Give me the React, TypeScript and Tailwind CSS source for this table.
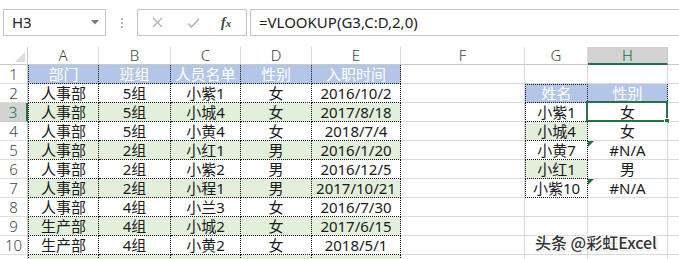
import React from "react";

type Fill = "blue" | "green" | "none";

const FONT = '"Noto Sans", "Noto Sans CJK SC", sans-serif';

const cols = ["A", "B", "C", "D", "E", "F", "G", "H"];

const table: { cells: string[]; fill: Fill }[] = [
  { cells: ["部门", "班组", "人员名单", "性别", "入职时间"], fill: "blue" },
  { cells: ["人事部", "5组", "小紫1", "女", "2016/10/2"], fill: "none" },
  { cells: ["人事部", "5组", "小城4", "女", "2017/8/18"], fill: "green" },
  { cells: ["人事部", "5组", "小黄4", "女", "2018/7/4"], fill: "none" },
  { cells: ["人事部", "2组", "小红1", "男", "2016/1/20"], fill: "green" },
  { cells: ["人事部", "2组", "小紫2", "男", "2016/12/5"], fill: "none" },
  { cells: ["人事部", "2组", "小程1", "男", "2017/10/21"], fill: "green" },
  { cells: ["人事部", "4组", "小兰3", "女", "2016/7/30"], fill: "none" },
  { cells: ["生产部", "4组", "小城2", "女", "2017/6/15"], fill: "green" },
  { cells: ["生产部", "4组", "小黄2", "女", "2018/5/1"], fill: "none" },
  { cells: ["", "", "", "", ""], fill: "green" },
];

// lookup block in G:H, keyed by row index (0 = row 1)
const lookup: Record<number, { g: string; h: string; gFill: Fill; hFill: Fill; err?: boolean }> = {
  1: { g: "姓名", h: "性别", gFill: "blue", hFill: "blue" },
  2: { g: "小紫1", h: "女", gFill: "none", hFill: "none" },
  3: { g: "小城4", h: "女", gFill: "green", hFill: "none" },
  4: { g: "小黄7", h: "#N/A", gFill: "none", hFill: "none", err: true },
  5: { g: "小红1", h: "男", gFill: "green", hFill: "none" },
  6: { g: "小紫10", h: "#N/A", gFill: "none", hFill: "none", err: true },
};

function fillClass(f: Fill) {
  if (f === "blue") return "bg-[#b4c6e7] text-white";
  if (f === "green") return "bg-[#e2efda] text-[#1a1a1a]";
  return "bg-white text-[#1a1a1a]";
}

function Cell({
  text,
  fill,
  dotted,
  dotLeft,
  dotTop,
  children,
}: {
  text?: string;
  fill: Fill;
  dotted?: boolean;
  dotLeft?: boolean;
  dotTop?: boolean;
  children?: React.ReactNode;
}) {
  return (
    <div
      className={`relative flex items-center justify-center overflow-visible whitespace-nowrap text-[15px] leading-none ${fillClass(
        fill
      )} ${
        dotted
          ? "border-r border-b border-dotted border-[#111]"
          : "border-r border-b border-solid border-[#dadada]"
      } ${dotLeft ? "border-l border-l-[#111] border-l-dotted" : ""} ${
        dotTop ? "border-t border-t-[#111] border-t-dotted" : ""
      }`}
    >
      {text}
      {children}
    </div>
  );
}

function ErrorMark() {
  return (
    <svg className="absolute left-0 top-0" width="6" height="6" viewBox="0 0 6 6">
      <polygon points="0,0 6,0 0,6" fill="#1e7145" />
    </svg>
  );
}

function FormulaBar() {
  return (
    <div className="flex h-[47px] items-start bg-white pt-[9px]" style={{ fontFamily: FONT }}>
      <div className="ml-[3px] flex h-[27px] w-[103px] items-center justify-between border border-[#c6c6c6] pl-[8px] pr-[6px] text-[15px] text-[#222]">
        <span>H3</span>
        <svg width="8" height="5" viewBox="0 0 8 5">
          <polygon points="0,0 8,0 4,4.5" fill="#7a7a7a" />
        </svg>
      </div>
      <div className="flex h-[27px] w-[31px] flex-col items-center justify-center gap-[2px]">
        <span className="h-[2px] w-[2px] bg-[#b5b5b5]" />
        <span className="h-[2px] w-[2px] bg-[#b5b5b5]" />
        <span className="h-[2px] w-[2px] bg-[#b5b5b5]" />
      </div>
      <div className="flex h-[27px] w-[110px] items-center border border-[#c6c6c6]">
        <svg className="ml-[14px]" width="11" height="11" viewBox="0 0 11 11">
          <path d="M1 1 L10 10 M10 1 L1 10" stroke="#b3b3b3" strokeWidth="1.4" />
        </svg>
        <svg className="ml-[24px]" width="13" height="10" viewBox="0 0 13 10">
          <path d="M1 5.5 L4.5 9 L12 1" stroke="#b3b3b3" strokeWidth="1.6" fill="none" />
        </svg>
        <span
          className="ml-[21px] text-[14px] italic text-[#444]"
          style={{ fontFamily: '"Liberation Serif", serif' }}
        >
          <b className="font-bold">f</b>
          <span className="text-[11px] font-bold">x</span>
        </span>
      </div>
      <div className="ml-[3px] flex h-[27px] flex-1 items-center border-y border-l border-[#c6c6c6] pl-[8px] text-[15px] text-[#222]">
        =VLOOKUP(G3,C:D,2,0)
      </div>
    </div>
  );
}

export default function App() {
  const rows = table.length;
  return (
    <div className="relative h-[259px] w-[679px] overflow-hidden bg-white" style={{ fontFamily: FONT }}>
      <FormulaBar />
      <div className="grid grid-cols-[28px_71px_72px_70px_71px_89px_124px_63px_80px_11px] grid-rows-[18px_repeat(11,19px)]">
        {/* column headings */}
        <div className="relative border-r border-b border-[#c8c8c8] bg-white">
          <svg className="absolute bottom-[2px] right-[2px]" width="10" height="10" viewBox="0 0 10 10">
            <polygon points="10,0 10,10 0,10" fill="#dcdcdc" />
          </svg>
        </div>
        {cols.map((c) =>
          c === "H" ? (
            <div
              key={c}
              className="flex items-center justify-center border-r border-b-2 border-r-[#c8c8c8] border-b-[#217346] bg-[#d3d3d3] text-[15px] font-light text-[#1d6b3d]"
            >
              {c}
            </div>
          ) : (
            <div
              key={c}
              className="flex items-center justify-center border-r border-b border-r-[#dedede] border-b-[#c8c8c8] bg-white text-[15px] font-light text-[#444]"
            >
              {c}
            </div>
          )
        )}
        <div className="border-b border-[#c8c8c8] bg-white" />

        {Array.from({ length: rows }).map((_, r) => {
          const t = table[r];
          const lk = lookup[r];
          const selectedRow = r === 2;
          const lastPartial = r === rows - 1;
          return (
            <React.Fragment key={r}>
              {selectedRow ? (
                <div className="flex items-center justify-center border-r-2 border-b border-r-[#217346] border-b-[#c8c8c8] bg-[#d3d3d3] text-[15px] font-light text-[#1d6b3d]">
                  {r + 1}
                </div>
              ) : (
                <div className="flex items-center justify-center border-r border-b border-r-[#c8c8c8] border-b-[#dedede] bg-white text-[15px] font-light text-[#444]">
                  {lastPartial ? "" : r + 1}
                </div>
              )}
              {t.cells.map((v, ci) => (
                <Cell key={ci} text={v} fill={t.fill} dotted dotLeft={ci === 0} />
              ))}
              {/* F */}
              <Cell fill="none" />
              {/* G */}
              {lk ? (
                <Cell text={lk.g} fill={lk.gFill} dotted dotLeft dotTop={r === 1} />
              ) : (
                <Cell fill="none" />
              )}
              {/* H */}
              {lk ? (
                <Cell text={lk.h} fill={lk.hFill} dotted={r === 1}>
                  {lk.err && <ErrorMark />}
                  {r === 2 && (
                    <div className="absolute left-[-2px] top-[-2px] h-[21px] w-[82px] border-2 border-[#217346]">
                      <div className="absolute bottom-[-4px] right-[-4px] h-[6px] w-[6px] border border-white bg-[#217346]" />
                    </div>
                  )}
                </Cell>
              ) : (
                <Cell fill="none" />
              )}
              <div className="border-b border-[#dadada] bg-white" />
            </React.Fragment>
          );
        })}
      </div>

      {/* watermark */}
      <div
        className="absolute left-[535px] top-[230px] text-[16px] font-medium text-[#333]"
        style={{
          fontFamily: '"Noto Sans CJK SC", "Noto Sans", sans-serif',
          textShadow: "1px 1px 0 #fff, -1px -1px 0 #fff, 1px -1px 0 #fff, -1px 1px 0 #fff, 1px 1px 2px #999",
        }}
      >
        头条 @彩虹Excel
      </div>
    </div>
  );
}
